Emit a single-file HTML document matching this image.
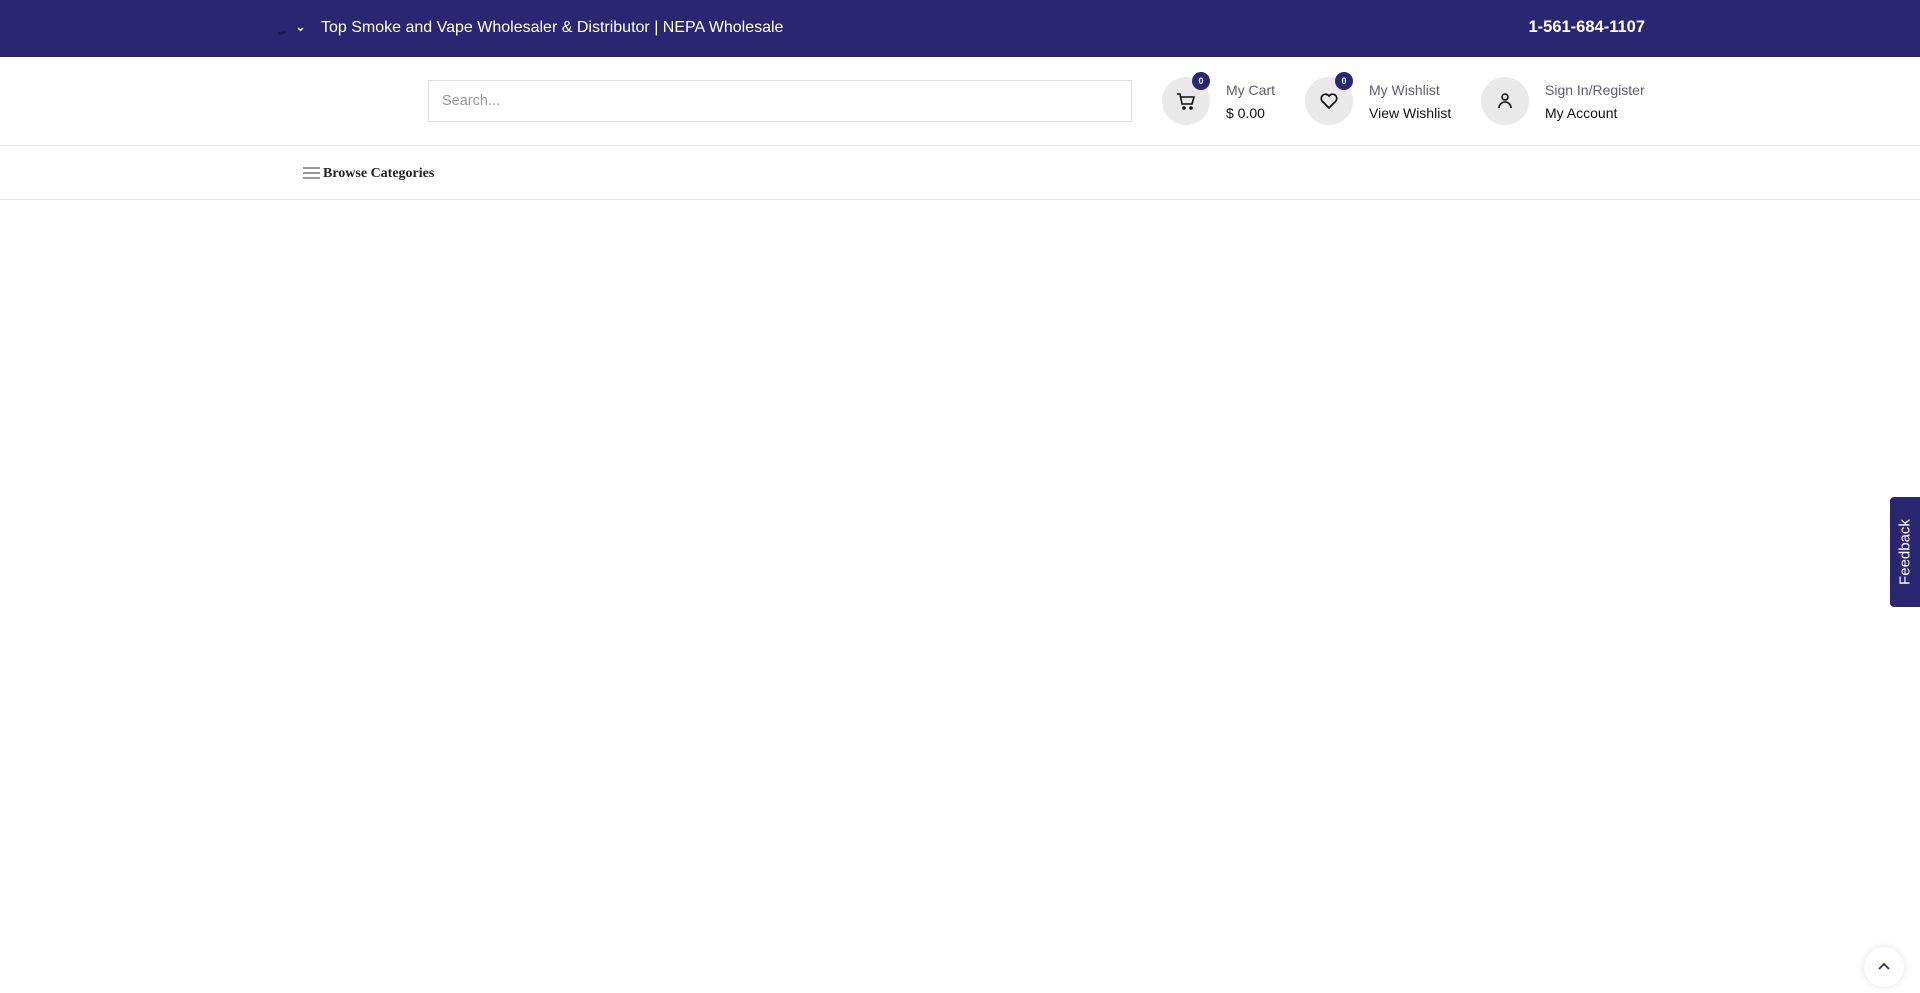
<!DOCTYPE html>
<html><head><meta charset="utf-8"><style>
*{box-sizing:border-box;margin:0;padding:0}
body{width:1920px;height:993px;background:#fff;font-family:"Liberation Sans",sans-serif;position:relative;overflow:hidden}
.top{position:absolute;left:0;top:0;width:1920px;height:57px;background:#2b2672;color:#fff}
.title{position:absolute;left:321px;top:19px;font-size:16px}
.phone{position:absolute;right:275px;top:18px;font-size:16.5px;font-weight:bold}
.line{position:absolute;left:0;width:1920px;height:1px;background:#e5e5e5}
.search{position:absolute;left:428px;top:80px;width:704px;height:42px;border:1px solid #ddd;font-size:14.5px;color:#999;padding:12px 13px}
.circ{position:absolute;width:48px;height:48px;border-radius:50%;background:#e9e9ea;top:77px}
.circ svg{position:absolute;left:14px;top:14px}
.badge{position:absolute;width:18px;height:18px;border-radius:50%;background:#2b2672;color:#fff;font-size:9px;font-weight:bold;text-align:center;line-height:18px;top:72px}
.l1{position:absolute;top:82px;font-size:14px;color:#5b5e72}
.l2{position:absolute;top:105px;font-size:14px;color:#111}
.browse{position:absolute;left:323px;top:166px;font-family:"Liberation Serif",serif;font-weight:bold;font-size:14px;color:#222}
.fb{position:absolute;left:1890px;top:497px;width:30px;height:110px;background:#2b2672;border-radius:4px 0 0 4px}
.fb span{position:absolute;left:50%;top:50%;transform:translate(-50%,-50%) rotate(-90deg);color:#fff;font-size:15px;white-space:nowrap}
.up{position:absolute;left:1864px;top:947px;width:40px;height:40px;border-radius:50%;background:#fff;box-shadow:0 0 8px rgba(0,0,0,.12)}
</style></head><body>
<div class="top">
<svg style="position:absolute;left:274px;top:20px" width="36" height="16"><path d="M4 13a6 6 0 0 0 7-2" stroke="#1a1850" stroke-width="2.5" fill="none"/><path d="M24 8l2.5 2.5 2.5-2.5" stroke="#fff" stroke-width="1.3" fill="none"/></svg>
<div class="title">Top Smoke and Vape Wholesaler &amp; Distributor | NEPA Wholesale</div>
<div class="phone">1-561-684-1107</div>
</div>
<div class="search">Search...</div>
<div class="circ" style="left:1162px"><svg width="20" height="20" viewBox="0 0 20 20" fill="none" stroke="#111" stroke-width="1.6"><path d="M1 3h3l2 10h10l2-7H5"/><circle cx="8" cy="17" r="1" fill="#111"/><circle cx="15" cy="17" r="1" fill="#111"/></svg></div>
<div class="badge" style="left:1192px">0</div>
<div class="l1" style="left:1226px">My Cart</div><div class="l2" style="left:1226px">$ 0.00</div>
<div class="circ" style="left:1305px"><svg width="20" height="20" viewBox="0 0 20 20" fill="none" stroke="#111" stroke-width="1.7"><path d="M10 17L3 10a4 4 0 0 1 7-5 4 4 0 0 1 7 5z"/></svg></div>
<div class="badge" style="left:1335px">0</div>
<div class="l1" style="left:1369px">My Wishlist</div><div class="l2" style="left:1369px">View Wishlist</div>
<div class="circ" style="left:1481px"><svg width="20" height="20" viewBox="0 0 20 20" fill="none" stroke="#111" stroke-width="1.6"><circle cx="10" cy="6" r="3"/><path d="M4 17a6 6 0 0 1 12 0"/></svg></div>
<div class="l1" style="left:1545px">Sign In/Register</div><div class="l2" style="left:1545px">My Account</div>
<div class="line" style="top:145px"></div>
<svg style="position:absolute;left:303px;top:166px" width="18" height="14" stroke="#777" stroke-width="1.5"><path d="M0 2h17M0 7h17M0 12h17"/></svg>
<div class="browse">Browse Categories</div>
<div class="line" style="top:199px"></div>
<div class="fb"><span>Feedback</span></div>
<div class="up"><svg style="position:absolute;left:13px;top:14px" width="14" height="10" fill="none" stroke="#2b2672" stroke-width="1.8"><path d="M2 8l5-5 5 5"/></svg></div>
</body></html>
